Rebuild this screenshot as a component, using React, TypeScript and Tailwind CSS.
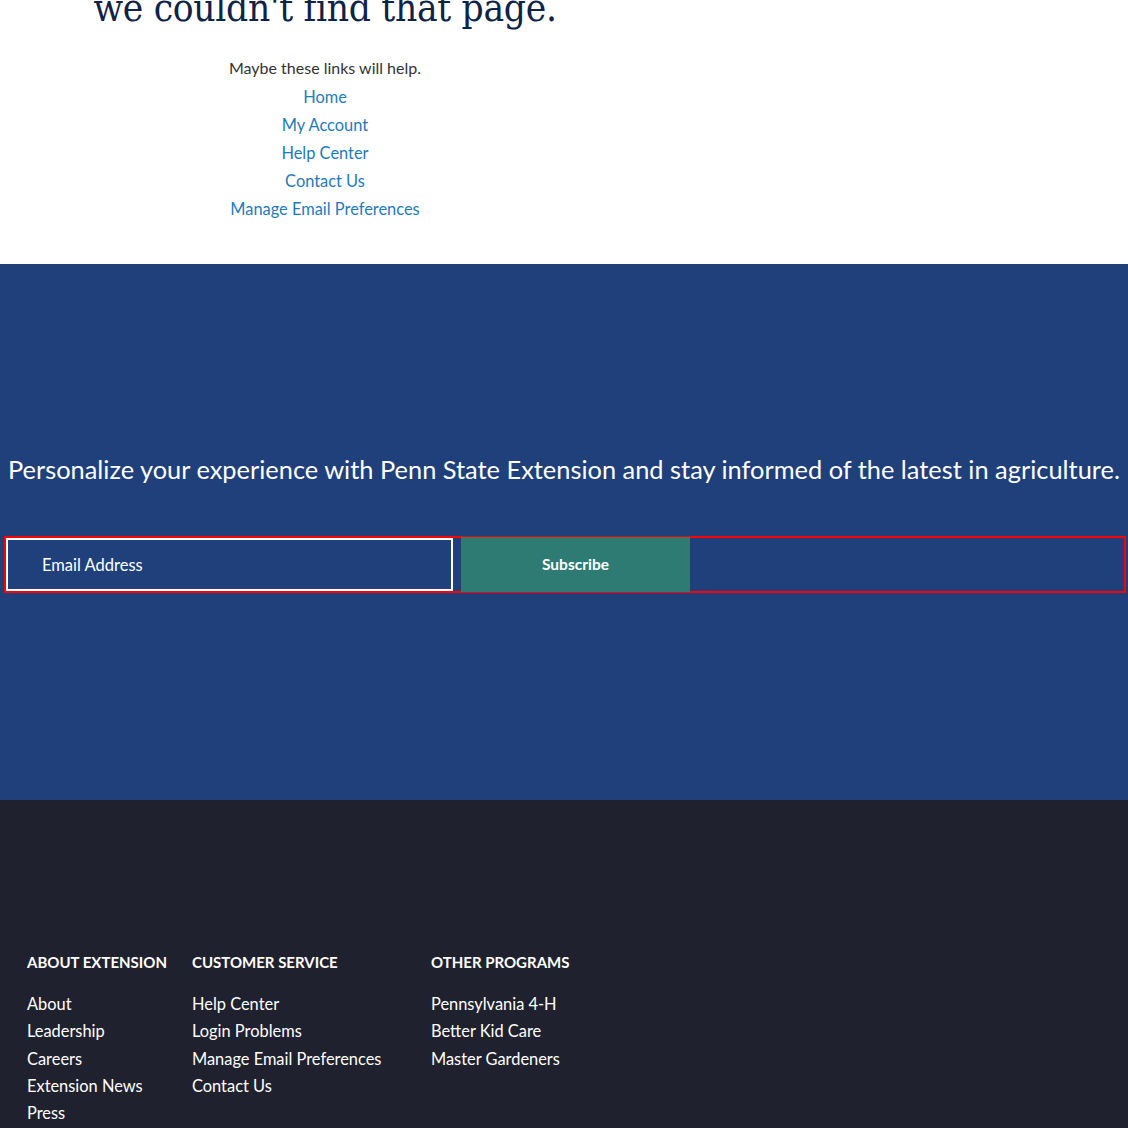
const helpLinks = ["Home", "My Account", "Help Center", "Contact Us", "Manage Email Preferences"];

const footerCols = [
  { title: "About Extension", w: "w-[165px]", links: ["About", "Leadership", "Careers", "Extension News", "Press"] },
  { title: "Customer Service", w: "w-[239px]", links: ["Help Center", "Login Problems", "Manage Email Preferences", "Contact Us"] },
  { title: "Other Programs", w: "w-[200px]", links: ["Pennsylvania 4-H", "Better Kid Care", "Master Gardeners"] },
];

const App = () => {
  return (
    <div className="min-h-screen bg-white font-['Lato',sans-serif]">
      {/* Not found */}
      <section className="h-[264px] overflow-hidden">
        <div className="w-[650px] text-center">
          <h1 className="-mt-[18px] text-[38.5px] leading-[52px] text-[#0f2347] font-['DejaVu_Serif',serif] font-stretch-condensed tracking-[-0.3px]">
            we couldn't find that page.
          </h1>
          <p className="mt-[20px] text-[16px] leading-[28px] text-[#333]">Maybe these links will help.</p>
          <ul className="pt-px text-[16.4px] leading-[28px]">
            {helpLinks.map((l) => (
              <li key={l}>
                <a href="#" className="text-[#1e7bb8]">{l}</a>
              </li>
            ))}
          </ul>
        </div>
      </section>

      {/* Newsletter */}
      <section className="h-[536px] bg-[#1f407b] pt-[188px]">
        <h2 className="text-center text-[25.4px] leading-[34px] text-white">
          Personalize your experience with Penn State Extension and stay informed of the latest in agriculture.
        </h2>
        <form className="mt-[50px] ml-[4px] mr-[2px] flex h-[57px] border-2 border-[#ff0000]">
          <input
            placeholder="Email Address"
            className="h-full w-[447px] border-2 border-white bg-transparent pl-[34px] text-[16.5px] text-white placeholder:text-white outline-none"
          />
          <button type="button" className="ml-[8px] -mt-px h-[55px] w-[229px] bg-[#2e7b74] text-[15.5px] font-bold text-white">
            Subscribe
          </button>
        </form>
      </section>

      {/* Footer */}
      <footer className="h-[328px] bg-[#20212e] pt-[152px] pl-[27px]">
        <div className="flex">
          {footerCols.map((col) => (
            <div key={col.title} className={col.w}>
              <h3 className="text-[15px] leading-[20px] font-bold uppercase text-white">{col.title}</h3>
              <ul className="mt-[18px] text-[16.4px] leading-[27.3px] text-white">
                {col.links.map((l) => (
                  <li key={l}>
                    <a href="#">{l}</a>
                  </li>
                ))}
              </ul>
            </div>
          ))}
        </div>
      </footer>
    </div>
  );
};

export default App;
